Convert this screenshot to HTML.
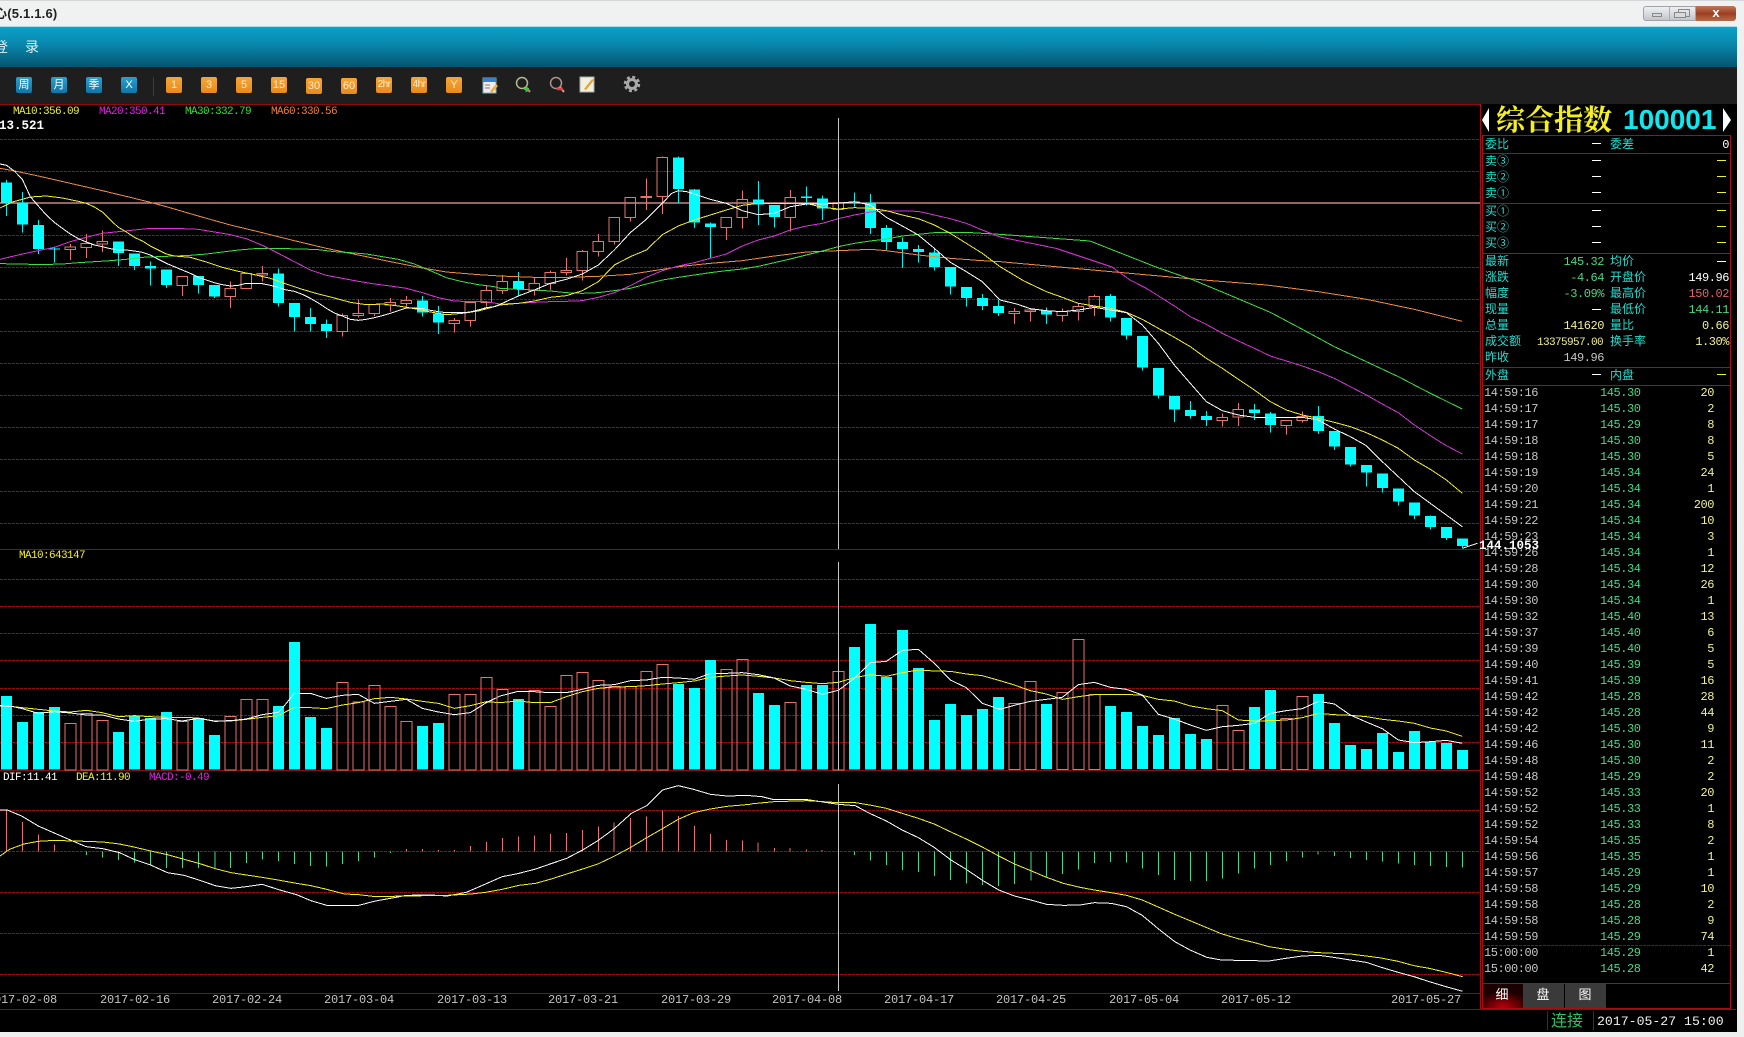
<!DOCTYPE html>
<html lang="zh"><head><meta charset="utf-8"><title>行情</title>
<style>
html,body{margin:0;padding:0;width:1744px;height:1037px;overflow:hidden;background:#eef0f0}
#w{position:absolute;left:0;top:0;width:1744px;height:1037px;overflow:hidden}
svg{position:absolute;left:0;top:0}
.a{position:absolute}
.ic{position:absolute;top:77px;width:16px;height:16px;border-radius:2px;color:#fff;font:11px/16px "Liberation Sans","Noto Sans CJK SC",sans-serif;text-align:center;overflow:hidden;white-space:nowrap}
.b{background:linear-gradient(#2a9fd0,#0f75a5)}
.o{background:linear-gradient(#f5a636,#e88a1e);color:#ffe9c4}
text{white-space:pre}
g[transform] *{shape-rendering:crispEdges}
.m{font-family:"Liberation Mono",monospace;font-size:12px;letter-spacing:-.45px}
.dt{font-family:"Liberation Mono",monospace;font-size:12px;letter-spacing:-.2px;fill:#c4c4c4}
.l{font-family:"Liberation Mono",monospace;font-size:11px;letter-spacing:-.6px}
.c{font-family:"Liberation Sans","Noto Sans CJK SC",sans-serif;font-size:12px;fill:#25dcd0}
.g{fill:#45d985}.y{fill:#f2f08e}.t{fill:#c6c6c6}.wh{fill:#fff}
.tm .m{fill:#c6c6c6}
</style></head><body><div id="w">
<div class="a" style="left:0;top:0;width:1744px;height:27px;background:#f0f2f2;border-top:1px solid #d4d6d8;box-sizing:border-box"></div>
<div class="a" style="left:-6px;top:6px;font:bold 13px/16px 'Liberation Sans','Noto Sans CJK SC',sans-serif;letter-spacing:.2px;color:#222">心(5.1.1.6)</div>
<div class="a" style="left:1643px;top:6px;width:53px;height:15px;background:linear-gradient(#eef0f2,#c2c6cb);border:1px solid #a0a4a8;box-sizing:border-box;border-radius:3px 0 0 3px"></div>
<div class="a" style="left:1652px;top:13px;width:10px;height:4px;border:1px solid #888;box-sizing:border-box"></div>
<div class="a" style="left:1669px;top:6px;width:1px;height:15px;background:#a8acb0"></div>
<div class="a" style="left:1678px;top:9px;width:12px;height:8px;border:1px solid #888;box-sizing:border-box"></div>
<div class="a" style="left:1674px;top:12px;width:12px;height:6px;border:1px solid #888;box-sizing:border-box;background:#d8dadc"></div>
<div class="a" style="left:1696px;top:6px;width:40px;height:15px;background:linear-gradient(#c0785c,#9c3e22 50%,#b86c4a);border-radius:0 3px 3px 0;color:#fff;font:bold 13px/13px 'Liberation Sans',sans-serif;text-align:center">x</div>
<div class="a" style="left:0;top:26px;width:1737px;height:41px;background:linear-gradient(#0ba2ca,#0886aa 45%,#045570);border-top:1px solid #a8dce8;box-sizing:border-box"></div>
<div class="a" style="left:-6px;top:39px;font:14px/17px 'Liberation Sans','Noto Sans CJK SC',sans-serif;color:#dff0f5;letter-spacing:17px">登录</div>
<div class="a" style="left:0;top:67px;width:1737px;height:37px;background:#1e1e1e"></div>
<div class="a" style="left:0;top:104px;width:1737px;height:928px;background:#000"></div>
<div class="ic b" style="left:16px">周</div><div class="ic b" style="left:51px">月</div><div class="ic b" style="left:86px">季</div><div class="ic b" style="left:121px">X</div>
<div class="a" style="left:153px;top:77px;width:1px;height:19px;background:#3c3c3c"></div>
<div class="ic o" style="left:166px">1</div><div class="ic o" style="left:201px">3</div><div class="ic o" style="left:236px">5</div><div class="ic o" style="left:271px">15</div><div class="ic o" style="left:306px;top:78px">30</div><div class="ic o" style="left:341px;top:78px">60</div><div class="ic o" style="left:376px;font-size:10px;letter-spacing:-.6px">2hr</div><div class="ic o" style="left:411px;font-size:10px;letter-spacing:-.6px">4hr</div><div class="ic o" style="left:446px">Y</div>
<svg width="1744" height="1037" viewBox="0 0 1744 1037" fill="none">
<!-- toolbar icons -->
<rect x="483" y="78" width="13" height="15" fill="#e8eef4" stroke="#8aa"/><rect x="483" y="78" width="13" height="4" fill="#3a7fc8"/><path d="M490 91l6-7 2 2-6 7z" fill="#f0b040"/><path d="M485 85h5M485 88h5" stroke="#c06060"/>
<circle cx="522" cy="83" r="5.5" stroke="#b8b890" stroke-width="1.5"/><path d="M526 87l4 5" stroke="#e08060" stroke-width="2"/><path d="M524 89h5M526.500 87v5" stroke="#40c050" stroke-width="2"/>
<circle cx="556" cy="83" r="5.5" stroke="#b09090" stroke-width="1.5"/><path d="M560 87l4 5" stroke="#e0a080" stroke-width="2"/><path d="M557 89h6" stroke="#e04040" stroke-width="2.500"/>
<rect x="580" y="77" width="14" height="15" fill="#f0f0e0" stroke="#aaa"/><path d="M584 89l8-10 2 1-8 10z" fill="#e8a030"/>
<circle cx="632" cy="84" r="4.500" stroke="#a8a8a8" stroke-width="3"/><circle cx="632" cy="84" r="7" stroke="#a8a8a8" stroke-width="2.500" stroke-dasharray="3 2.500"/>

<!-- frames -->
<g stroke="#8e0b10" shape-rendering="crispEdges">
<path d="M0 104.500H1480M0 549.500H1480M0 770.500H1480M0 993.500H1480M0 1009.500H1736"/>
<path d="M1480.500 104V1009M1482.500 135V1009M1730.500 135V1009M1482 135.500H1731M1482 153.500H1731M1482 203.500H1731M1482 253.500H1731M1482 367.500H1731M1482 385.500H1731M1482 983.500H1731M1482 1008.500H1731" stroke="#a50e12"/>
<path d="M1547.500 1011V1030M1593.500 1011V1030"/>
</g>
<path d="M1483 945.500H1730" stroke="#8e0b10" stroke-dasharray="3 1" shape-rendering="crispEdges"/>
<path d="M0 139.500H1480M0 171.500H1480M0 235.500H1480M0 267.500H1480M0 299.500H1480M0 331.500H1480M0 363.500H1480M0 395.500H1480M0 427.500H1480M0 459.500H1480M0 491.500H1480M0 523.500H1480M0 579.500H1480M0 606.500H1480M0 633.500H1480M0 660.500H1480M0 688.500H1480M0 715.500H1480M0 742.500H1480M0 810.500H1480M0 851.500H1480M0 892.500H1480M0 933.500H1480M0 974.500H1480" stroke="#960c10" stroke-dasharray="3 1" shape-rendering="crispEdges"/>
<path d="M0 203H1480" stroke="#eea0a0" stroke-width="1.200"/>

<!-- candles 1 -->
<g transform="translate(0,140) scale(.33333)">
<path stroke="#00f0f0" stroke-width="3" d="M19 120V228M67 156V278M115 240V342M163 320V368M355 304V378M403 340V390M451 364V436M499 388V444M595 408V460M643 435V474M835 385V500M883 489V574M931 504V574M979 538V594M1267 468V530M1315 498V582"/>
<path stroke="#00ffff" stroke-width="33" d="M19 128V188M67 188V254M115 255V327M163 325V328M355 304V339M403 340V378M451 378V386M499 388V435M595 408V435M643 435V469M835 400V489M883 489V531M931 531V552M979 552V573M1267 481V518M1315 520V548"/>
<path stroke="#e8726c" stroke-width="3" d="M211 312V321M211 329V360M259 282V310M259 323V354M307 272V304M307 312V336M547 437V468M691 424V445M691 470V504M739 398V401M787 378V400M787 405V424M1027 520V526M1027 574V590M1075 478V520M1075 527V532M1123 520V528M1171 474V488M1171 495V514M1219 468V481M1219 491V506M1363 534V541M1363 551V578M1411 542V560M1459 438V451M1459 487V500M195 321h32V329h-32zM243 310h32V323h-32zM291 304h32V312h-32zM531 409h32V437h-32zM675 445h32V470h-32zM723 401h32V446h-32zM771 400h32V405h-32zM1011 526h32V574h-32zM1059 520h32V527h-32zM1107 493h32V520h-32zM1155 488h32V495h-32zM1203 481h32V491h-32zM1347 541h32V551h-32zM1395 487h32V542h-32zM1443 451h32V487h-32z"/>
<polyline stroke="#f08a3c" stroke-width="3" points="0,85 40,92 115,108 211,130 307,152 403,175 451,187 499,200 595,228 691,255 787,278 883,302 979,325 1075,345 1171,365 1267,384 1339,396 1435,404 1500,408"/>
<polyline stroke="#3ae03a" stroke-width="3" points="0,371 67,372 115,374 187,372 235,368 283,365 331,362 379,358 427,352 475,350 523,348 571,346 619,342 667,336 715,330 763,326 811,326 859,326 907,327 955,329 1003,335 1051,338 1099,342 1147,350 1195,358 1243,372 1291,392 1339,413 1387,425 1435,434 1483,440 1500,445"/>
<polyline stroke="#e030e0" stroke-width="3" points="0,358 67,342 115,332 163,322 211,305 259,292 307,280 355,275 403,270 451,265 499,266 547,266 595,268 643,276 691,284 739,296 787,316 835,340 883,365 931,390 979,406 1027,415 1075,424 1123,432 1171,438 1219,445 1267,458 1315,473 1363,483 1411,485 1459,485 1500,492"/>
<polyline stroke="#f4f020" stroke-width="3" points="0,204 40,185 67,178 91,171 139,168 187,174 235,184 259,190 283,201 307,216 331,240 355,262 379,276 403,292 427,303 451,318 475,330 499,342 523,348 571,352 619,366 667,382 715,394 763,404 811,415 859,432 907,448 955,462 1003,474 1051,487 1099,494 1147,492 1195,498 1243,506 1291,516 1339,524 1387,520 1435,513 1483,500 1500,495"/>
<polyline stroke="#fff" stroke-width="3" points="0,72 20,76 45,95 67,118 91,170 115,198 139,225 163,247 187,265 211,282 235,296 259,306 283,315 307,320 331,326 355,330 379,330 403,333 427,337 451,345 475,358 499,370 523,380 547,390 571,400 595,412 619,420 643,428 667,434 691,438 715,436 739,430 763,430 787,431 811,436 835,442 859,450 883,454 907,463 931,475 955,489 979,505 1003,519 1027,528 1051,538 1075,541 1099,538 1123,533 1147,527 1171,520 1195,512 1219,504 1243,504 1267,506 1291,511 1315,515 1339,518 1363,518 1387,518 1411,516 1435,510 1459,503 1483,500 1500,493"/>
</g>
<!-- candles 2 -->
<g transform="translate(500,140) scale(.33333)">
<path stroke="#00f0f0" stroke-width="3" d="M55 396V466M535 50V190M583 147V264M631 248V354M775 123V255M823 195V262M919 140V196M967 166V240M1063 158V200M1111 162V282M1159 255V330M1207 292V384M1255 315V368M1303 326V392M1351 381V464M1399 441V500M1447 462V510M1495 480V528"/>
<path stroke="#00ffff" stroke-width="33" d="M55 423V449M535 52V147M583 148V248M631 250V261M775 178V194M823 195V231M919 170V174M967 175V205M1063 184V186M1111 187V264M1159 264V306M1207 306V327M1255 327V336M1303 337V381M1351 381V440M1399 441V474M1447 474V498M1495 498V519"/>
<path stroke="#e8726c" stroke-width="3" d="M7 405V424M7 452V462M103 414V431M103 452V466M151 392V397M151 431V450M199 354V391M199 398V406M247 330V334M247 392V422M295 282V304M295 335V350M343 305V314M391 233V244M439 116V169M439 173V210M487 50V52M487 170V222M679 263V300M727 152V178M727 233V266M871 150V172M871 233V274M1015 185V187M-9 424h32V452h-32zM87 431h32V452h-32zM135 397h32V431h-32zM183 391h32V398h-32zM231 334h32V392h-32zM279 304h32V335h-32zM327 232h32V305h-32zM375 172h32V233h-32zM423 169h32V173h-32zM471 52h32V170h-32zM663 233h32V263h-32zM711 178h32V233h-32zM855 172h32V233h-32zM999 187h32V208h-32z"/>
<polyline stroke="#f08a3c" stroke-width="3" points="0,408 103,412 199,412 295,409 391,403 487,388 535,380 631,370 727,362 823,348 919,336 1015,332 1111,328 1159,332 1255,345 1351,355 1447,362 1500,365"/>
<polyline stroke="#3ae03a" stroke-width="3" points="0,445 55,448 103,450 151,453 199,458 247,460 295,458 343,452 391,445 439,432 487,420 535,412 583,405 631,398 679,392 727,387 775,379 823,368 871,357 919,345 967,333 1015,320 1063,310 1111,303 1159,297 1207,288 1255,283 1303,278 1351,277 1399,277 1447,280 1500,283"/>
<polyline stroke="#d830d8" stroke-width="3" points="0,492 55,490 103,487 151,485 199,484 247,482 295,472 343,458 391,437 439,412 487,392 535,378 583,368 631,355 679,342 727,318 775,300 823,288 871,270 919,258 967,250 1015,236 1063,225 1111,216 1159,213 1207,213 1255,214 1303,225 1351,236 1399,250 1447,270 1500,291"/>
<polyline stroke="#f4f020" stroke-width="3" points="0,495 55,490 103,483 151,472 199,467 247,452 295,425 343,375 391,350 439,330 487,284 535,258 583,240 631,225 679,210 727,196 775,190 823,190 871,190 919,190 967,202 1015,207 1063,203 1111,205 1159,212 1207,225 1255,236 1303,255 1351,280 1399,310 1447,340 1500,380"/>
<polyline stroke="#fff" stroke-width="3" points="0,493 7,490 55,468 103,450 151,430 199,418 247,402 295,375 343,330 391,278 439,238 487,190 515,160 535,152 560,155 583,162 631,178 679,190 727,212 775,224 823,220 871,200 919,192 967,192 1015,190 1063,185 1111,195 1159,232 1207,258 1255,285 1303,325 1351,367 1399,395 1447,425 1500,480"/>
</g>
<!-- candles 3 -->
<g transform="translate(1000,280) scale(.33333)">
<path stroke="#00f0f0" stroke-width="3" d="M139 82V132M331 42V124M379 114V178M427 168V272M475 264V356M523 348V426M571 363V416M619 393V438M763 372V420M811 396V458M955 378V462M1003 453V510M1051 501V560M1099 555V620M1147 580V638M1195 625V677M1243 667V717M1291 706V749M1339 741V780M1387 775V805"/>
<path stroke="#00ffff" stroke-width="33" d="M139 91V104M331 48V113M379 114V167M427 168V263M475 264V347M523 348V389M571 390V408M619 408V420M763 388V399M811 400V435M955 408V453M1003 453V500M1051 501V554M1099 555V578M1147 580V624M1195 625V665M1243 667V707M1291 708V741M1339 741V774M1387 775V798"/>
<path stroke="#e8726c" stroke-width="3" d="M43 84V94M43 101V132M91 86V90M91 95V125M187 85V94M187 106V124M235 72V80M235 94V122M283 44V49M283 80V108M667 400V412M667 422V440M715 369V388M715 411V438M859 437V464M907 394V410M907 422V428M27 94h32V101h-32zM75 90h32V95h-32zM171 94h32V106h-32zM219 80h32V94h-32zM267 49h32V80h-32zM651 412h32V422h-32zM699 388h32V411h-32zM843 421h32V437h-32zM891 410h32V422h-32z"/>
<polyline stroke="#f08a3c" stroke-width="3" points="0,-55 300,-28 635,2 800,15 955,35 1100,58 1243,88 1387,124"/>
<polyline stroke="#3ae03a" stroke-width="3" points="0,-137 270,-117 468,-39 580,0 700,50 811,97 907,148 1003,200 1099,245 1195,290 1291,340 1387,387"/>
<polyline stroke="#d830d8" stroke-width="3" points="0,-129 168,-95 336,-39 390,0 439,25 487,55 523,78 571,110 619,133 667,160 715,183 763,205 811,228 859,243 907,258 955,275 1003,295 1051,320 1099,345 1147,372 1195,398 1243,435 1291,467 1339,497 1387,522"/>
<polyline stroke="#f4f020" stroke-width="3" points="0,-40 70,2 139,35 187,52 235,70 283,78 331,85 379,97 427,118 475,145 523,172 571,200 619,235 667,265 715,298 763,330 811,365 859,390 907,405 955,415 1003,427 1051,440 1099,458 1147,480 1195,505 1243,540 1291,568 1339,600 1387,640"/>
<polyline stroke="#fff" stroke-width="3" points="0,60 50,72 91,86 139,92 187,95 235,90 283,82 331,90 379,98 427,135 475,190 523,255 571,310 619,365 667,392 715,405 763,412 811,412 859,412 907,412 955,420 1003,447 1051,470 1099,497 1147,545 1195,590 1243,635 1291,670 1339,705 1387,740"/>
<polyline stroke="#fff" stroke-width="3" points="1387,805 1432,790"/>
</g>
<!-- volume 1 -->
<g transform="translate(0,540) scale(.33333)">
<path stroke="#00ffff" stroke-width="33" d="M19 468V688M67 546V688M115 516V688M163 501V688M355 576V688M403 526V688M451 534V688M499 516V688M595 534V688M643 585V688M835 498V688M883 306V688M931 531V688M979 564V688M1267 558V688M1315 549V688"/>
<path stroke="#e8726c" stroke-width="3" d="M195 550h33V690h-33zM243 520h33V690h-33zM291 541h33V690h-33zM531 544h33V690h-33zM675 529h33V690h-33zM723 478h33V690h-33zM771 478h33V690h-33zM1011 427h33V690h-33zM1059 486h33V690h-33zM1107 436h33V690h-33zM1155 499h33V690h-33zM1203 544h33V690h-33zM1347 463h33V690h-33zM1395 463h33V690h-33zM1443 412h33V690h-33z"/>
<polyline stroke="#f4f020" stroke-width="3" points="0,496 67,503 115,508 163,513 211,516 259,511 307,518 355,530 403,527 451,530 499,532 547,532 595,534 643,544 691,543 739,538 787,532 835,527 883,502 931,503 979,506 1027,495 1075,488 1123,476 1171,472 1219,477 1267,484 1315,490 1363,505 1411,497 1459,485 1500,488"/>
<polyline stroke="#fff" stroke-width="3" points="0,498 40,500 67,506 115,520 163,515 211,519 259,525 307,525 355,537 403,544 451,537 499,536 547,543 595,535 643,543 691,542 739,537 787,524 835,517 859,490 883,460 931,460 979,475 1027,466 1075,463 1123,490 1171,484 1219,478 1267,505 1315,516 1363,524 1411,518 1459,488 1500,468"/>
</g>
<!-- volume 2 -->
<g transform="translate(500,540) scale(.33333)">
<path stroke="#00ffff" stroke-width="33" d="M55 477V688M535 432V688M583 444V688M631 360V688M775 459V688M823 495V688M919 435V688M967 435V688M1063 321V688M1111 252V688M1159 411V688M1207 270V688M1255 384V688M1303 540V688M1351 492V688M1399 525V688M1447 507V688M1495 471V688"/>
<path stroke="#e8726c" stroke-width="3" d="M-9 448h33V690h-33zM87 452h33V690h-33zM135 499h33V690h-33zM183 406h33V690h-33zM231 397h33V690h-33zM279 421h33V690h-33zM327 440h33V690h-33zM375 440h33V690h-33zM423 394h33V690h-33zM471 373h33V690h-33zM663 388h33V690h-33zM711 358h33V690h-33zM855 487h33V690h-33zM999 394h33V690h-33z"/>
<polyline stroke="#f4f020" stroke-width="3" points="0,488 55,483 103,488 151,488 199,470 247,455 295,445 343,441 391,440 439,437 487,432 535,428 583,423 631,412 679,408 727,405 775,409 823,414 871,422 919,427 967,431 1015,427 1063,413 1111,404 1159,409 1207,398 1255,390 1303,393 1351,394 1399,402 1447,407 1500,422"/>
<polyline stroke="#fff" stroke-width="3" points="0,468 55,454 103,455 151,458 199,458 247,448 295,436 343,434 391,422 439,420 487,412 535,414 583,418 631,400 679,400 727,398 775,404 823,414 871,438 919,448 967,463 1015,451 1063,415 1111,368 1159,364 1207,331 1255,328 1303,370 1351,420 1399,443 1447,490 1500,508"/>
</g>
<!-- volume 3 -->
<g transform="translate(1000,620) scale(.33333)">
<path stroke="#00ffff" stroke-width="33" d="M139 252V447M331 258V447M379 276V447M427 318V447M475 345V447M523 294V447M571 342V447M619 357V447M763 261V447M811 210V447M955 222V447M1003 309V447M1051 375V447M1099 387V447M1147 339V447M1195 396V447M1243 333V447M1291 366V447M1339 369V447M1387 390V447"/>
<path stroke="#e8726c" stroke-width="3" d="M27 250h33V449h-33zM75 184h33V449h-33zM171 217h33V449h-33zM219 58h33V449h-33zM267 224h33V449h-33zM651 256h33V449h-33zM699 331h33V449h-33zM843 296h33V449h-33zM891 229h33V449h-33z"/>
<polyline stroke="#f4f020" stroke-width="3" points="0,182 43,195 91,212 139,222 187,238 235,230 283,224 331,223 379,223 427,226 475,238 523,243 571,258 619,266 667,272 715,300 763,303 811,302 859,300 907,293 955,280 1003,284 1051,286 1099,290 1147,298 1195,303 1243,310 1291,324 1339,333 1387,349"/>
<polyline stroke="#fff" stroke-width="3" points="0,268 43,256 91,244 139,238 187,232 235,194 283,187 331,202 379,208 427,225 475,283 523,297 571,315 619,331 667,320 715,316 763,310 811,280 859,272 907,266 955,244 1003,252 1051,285 1099,306 1147,326 1195,360 1243,368 1291,365 1339,361 1387,370"/>
</g>
<!-- macd 1 -->
<g transform="translate(0,770) scale(.47832,.33333)">
<path vector-effect="non-scaling-stroke" stroke="#e8726c" stroke-width="1" d="M14 118V244M47 156V244M80 194V244M114 224V244M850 237V244M883 237V244M917 240V244M950 240V244M984 228V244M1017 216V244M1051 204V244M1084 200V244M1117 197V244M1151 192V244M1184 189V244M1218 180V244M1251 170V244M1284 158V244M1318 144V244M1352 140V244M1385 122V244M1418 138V244M1452 168V244M1485 192V244M1519 210V244M1552 212V244"/>
<path vector-effect="non-scaling-stroke" stroke="#45d985" stroke-width="1" d="M181 244V255M214 244V262M248 244V270M281 244V278M315 244V284M348 244V294M382 244V294M415 244V294M449 244V295M482 244V294M515 244V279M549 244V268M582 244V273M616 244V282M649 244V288M683 244V290M716 244V282M750 244V273M783 244V262M816 244V249"/>
<polyline vector-effect="non-scaling-stroke" stroke="#fff" stroke-width="1" points="0,120 15,120 45,138 80,168 115,190 150,212 180,230 215,236 250,248 280,268 315,285 350,308 385,316 420,332 450,347 483,355 515,350 548,343 585,360 620,374 650,392 683,406 750,406 785,393 820,384 850,376 900,375 935,378 975,367 1015,342 1050,320 1085,310 1120,297 1150,282 1185,265 1218,240 1250,212 1285,175 1320,130 1352,107 1385,60 1418,47 1450,58 1485,73 1520,78 1568,76"/>
<polyline vector-effect="non-scaling-stroke" stroke="#f4f020" stroke-width="1" points="0,258 20,238 50,222 80,214 115,211 150,213 180,214 215,216 250,222 280,231 315,243 350,254 385,268 420,282 450,296 483,308 515,315 548,322 585,331 620,340 650,347 683,358 720,372 750,374 785,380 850,378 935,376 985,372 1015,367 1050,358 1085,346 1120,340 1150,328 1185,312 1218,297 1250,282 1285,258 1320,231 1352,203 1385,176 1418,148 1450,128 1485,117 1520,109 1568,103"/>
</g>
<!-- macd 2 -->
<g transform="translate(750,770) scale(.47832,.33333)">
<path vector-effect="non-scaling-stroke" stroke="#e8726c" stroke-width="1" d="M17 218V244M51 234V244M84 234V244M118 238V244M151 240V244"/>
<path vector-effect="non-scaling-stroke" stroke="#45d985" stroke-width="1" d="M218 244V255M252 244V271M285 244V285M319 244V300M352 244V306M386 244V318M419 244V330M453 244V340M486 244V345M520 244V348M553 244V342M587 244V332M620 244V320M653 244V312M687 244V298M720 244V279M754 244V276M787 244V278M821 244V295M854 244V315M888 244V330M921 244V333M954 244V333M988 244V325M1021 244V310M1055 244V295M1088 244V285M1122 244V273M1155 244V262M1188 244V254M1222 244V258M1255 244V264M1289 244V270M1322 244V274M1356 244V280M1389 244V285M1423 244V288M1456 244V291M1490 244V292"/>
<polyline vector-effect="non-scaling-stroke" stroke="#fff" stroke-width="1" points="0,77 25,80 50,89 120,89 185,103 220,107 250,130 285,153 318,180 352,203 385,232 420,270 452,298 487,332 520,360 553,378 587,390 620,403 655,406 690,405 720,398 755,400 787,410 820,436 855,478 888,515 920,540 955,562 985,570 1085,573 1120,565 1155,558 1190,556 1220,562 1255,570 1288,577 1320,592 1355,607 1388,620 1420,635 1455,650 1490,664"/>
<polyline vector-effect="non-scaling-stroke" stroke="#f4f020" stroke-width="1" points="0,102 50,95 120,92 185,98 220,98 250,105 285,115 318,130 352,145 385,162 420,186 452,207 487,232 520,258 553,282 587,302 620,322 655,340 690,352 720,360 755,368 787,376 820,390 855,412 888,433 920,452 955,473 985,491 1020,506 1055,518 1085,530 1120,538 1155,544 1190,548 1255,552 1288,558 1320,564 1355,574 1388,587 1420,595 1455,607 1490,620"/>
</g>
<!-- crosshair -->
<path d="M838.500 118V549M838.500 562V770M838.500 784V991" stroke="#c8c8c8" shape-rendering="crispEdges"/>
<!-- legends -->
<text class="l" x="13" y="114" fill="#ecec30">MA10:356.09</text>
<text class="l" x="99" y="114" fill="#e020e0">MA20:350.41</text>
<text class="l" x="185" y="114" fill="#30e030">MA30:332.79</text>
<text class="l" x="271" y="114" fill="#f08030">MA60:330.56</text>
<text x="-1" y="129" font-family="Liberation Mono" font-size="12.500" font-weight="bold" fill="#fff">13.521</text>
<text class="l" x="19" y="558" fill="#f4f020">MA10:643147</text>
<text class="l" x="3" y="780" fill="#fff">DIF:11.41</text>
<text class="l" x="76" y="780" fill="#f4f020">DEA:11.90</text>
<text class="l" x="149" y="780" fill="#e020e0">MACD:-0.49</text>
<text class="dt" x="-13" y="1003">2017-02-08</text><text class="dt" x="100" y="1003">2017-02-16</text><text class="dt" x="212" y="1003">2017-02-24</text><text class="dt" x="324" y="1003">2017-03-04</text><text class="dt" x="437" y="1003">2017-03-13</text><text class="dt" x="548" y="1003">2017-03-21</text><text class="dt" x="661" y="1003">2017-03-29</text><text class="dt" x="772" y="1003">2017-04-08</text><text class="dt" x="884" y="1003">2017-04-17</text><text class="dt" x="996" y="1003">2017-04-25</text><text class="dt" x="1109" y="1003">2017-05-04</text><text class="dt" x="1221" y="1003">2017-05-12</text><text class="dt" x="1391" y="1003">2017-05-27</text>
<!-- right header -->
<path d="M1489 108V132L1482 120z" fill="#fff"/><path d="M1723 108V132L1731 120z" fill="#fff"/>
<text x="1496" y="130" font-family="Noto Serif CJK SC,serif" font-size="29" font-weight="bold" fill="#f4f020">综合指数</text>
<text x="1623" y="129" font-family="Liberation Sans,sans-serif" font-size="28" font-weight="bold" fill="#10e8f0">100001</text>
<!-- quote labels -->
<text class="c" x="1485" y="148">委比</text><text class="c" x="1610" y="148">委差</text>
<text class="c" x="1485" y="165">卖③</text><text class="c" x="1485" y="181">卖②</text><text class="c" x="1485" y="197">卖①</text>
<text class="c" x="1485" y="215">买①</text><text class="c" x="1485" y="231">买②</text><text class="c" x="1485" y="247">买③</text>
<text class="c" x="1485" y="265">最新</text><text class="c" x="1610" y="265">均价</text>
<text class="c" x="1485" y="281">涨跌</text><text class="c" x="1610" y="281">开盘价</text>
<text class="c" x="1485" y="297">幅度</text><text class="c" x="1610" y="297">最高价</text>
<text class="c" x="1485" y="313">现量</text><text class="c" x="1610" y="313">最低价</text>
<text class="c" x="1485" y="329">总量</text><text class="c" x="1610" y="329">量比</text>
<text class="c" x="1485" y="345">成交额</text><text class="c" x="1610" y="345">换手率</text>
<text class="c" x="1485" y="361">昨收</text>
<text class="c" x="1485" y="379">外盘</text><text class="c" x="1610" y="379">内盘</text>
<!-- dashes -->
<path stroke="#fff" d="M1592 143.500H1601M1592 160.500H1601M1592 176.500H1601M1592 192.500H1601M1592 210.500H1601M1592 226.500H1601M1592 242.500H1601M1717 261.500H1726M1592 309.500H1601M1592 374.500H1601" shape-rendering="crispEdges"/>
<path stroke="#f0f030" d="M1717 160.500H1726M1717 176.500H1726M1717 192.500H1726M1717 210.500H1726M1717 226.500H1726M1717 242.500H1726M1717 374.500H1726" shape-rendering="crispEdges"/>
<!-- quote values -->
<text class="m wh" x="1729" y="148" text-anchor="end">0</text>
<text class="m g" x="1604" y="265" text-anchor="end">145.32</text>
<text class="m g" x="1604" y="281" text-anchor="end">-4.64</text>
<text class="m wh" x="1729" y="281" text-anchor="end">149.96</text>
<text class="m g" x="1604" y="297" text-anchor="end">-3.09%</text>
<text class="m" x="1729" y="297" text-anchor="end" fill="#e06468">150.02</text>
<text class="m g" x="1729" y="313" text-anchor="end">144.11</text>
<text class="m y" x="1604" y="329" text-anchor="end">141620</text>
<text class="m y" x="1729" y="329" text-anchor="end">0.66</text>
<text class="l y" x="1537" y="345">13375957.00</text>
<text class="m y" x="1729" y="345" text-anchor="end">1.30%</text>
<text class="m t" x="1604" y="361" text-anchor="end">149.96</text>
<!-- ticks -->
<g class="tm">
<text class="m" x="1484" y="396">14:59:16</text><text class="m" x="1484" y="412">14:59:17</text><text class="m" x="1484" y="428">14:59:17</text><text class="m" x="1484" y="444">14:59:18</text><text class="m" x="1484" y="460">14:59:18</text><text class="m" x="1484" y="476">14:59:19</text><text class="m" x="1484" y="492">14:59:20</text><text class="m" x="1484" y="508">14:59:21</text><text class="m" x="1484" y="524">14:59:22</text><text class="m" x="1484" y="540">14:59:23</text><text class="m" x="1484" y="556">14:59:26</text><text class="m" x="1484" y="572">14:59:28</text><text class="m" x="1484" y="588">14:59:30</text><text class="m" x="1484" y="604">14:59:30</text><text class="m" x="1484" y="620">14:59:32</text><text class="m" x="1484" y="636">14:59:37</text><text class="m" x="1484" y="652">14:59:39</text><text class="m" x="1484" y="668">14:59:40</text><text class="m" x="1484" y="684">14:59:41</text><text class="m" x="1484" y="700">14:59:42</text><text class="m" x="1484" y="716">14:59:42</text><text class="m" x="1484" y="732">14:59:42</text><text class="m" x="1484" y="748">14:59:46</text><text class="m" x="1484" y="764">14:59:48</text><text class="m" x="1484" y="780">14:59:48</text><text class="m" x="1484" y="796">14:59:52</text><text class="m" x="1484" y="812">14:59:52</text><text class="m" x="1484" y="828">14:59:52</text><text class="m" x="1484" y="844">14:59:54</text><text class="m" x="1484" y="860">14:59:56</text><text class="m" x="1484" y="876">14:59:57</text><text class="m" x="1484" y="892">14:59:58</text><text class="m" x="1484" y="908">14:59:58</text><text class="m" x="1484" y="924">14:59:58</text><text class="m" x="1484" y="940">14:59:59</text><text class="m" x="1484" y="956">15:00:00</text><text class="m" x="1484" y="972">15:00:00</text>
</g>
<g>
<text class="m g" x="1600" y="396">145.30</text><text class="m g" x="1600" y="412">145.30</text><text class="m g" x="1600" y="428">145.29</text><text class="m g" x="1600" y="444">145.30</text><text class="m g" x="1600" y="460">145.30</text><text class="m g" x="1600" y="476">145.34</text><text class="m g" x="1600" y="492">145.34</text><text class="m g" x="1600" y="508">145.34</text><text class="m g" x="1600" y="524">145.34</text><text class="m g" x="1600" y="540">145.34</text><text class="m g" x="1600" y="556">145.34</text><text class="m g" x="1600" y="572">145.34</text><text class="m g" x="1600" y="588">145.34</text><text class="m g" x="1600" y="604">145.34</text><text class="m g" x="1600" y="620">145.40</text><text class="m g" x="1600" y="636">145.40</text><text class="m g" x="1600" y="652">145.40</text><text class="m g" x="1600" y="668">145.39</text><text class="m g" x="1600" y="684">145.39</text><text class="m g" x="1600" y="700">145.28</text><text class="m g" x="1600" y="716">145.28</text><text class="m g" x="1600" y="732">145.30</text><text class="m g" x="1600" y="748">145.30</text><text class="m g" x="1600" y="764">145.30</text><text class="m g" x="1600" y="780">145.29</text><text class="m g" x="1600" y="796">145.33</text><text class="m g" x="1600" y="812">145.33</text><text class="m g" x="1600" y="828">145.33</text><text class="m g" x="1600" y="844">145.35</text><text class="m g" x="1600" y="860">145.35</text><text class="m g" x="1600" y="876">145.29</text><text class="m g" x="1600" y="892">145.29</text><text class="m g" x="1600" y="908">145.28</text><text class="m g" x="1600" y="924">145.28</text><text class="m g" x="1600" y="940">145.29</text><text class="m g" x="1600" y="956">145.29</text><text class="m g" x="1600" y="972">145.28</text>
</g>
<g text-anchor="end">
<text class="m y" x="1714" y="396">20</text><text class="m y" x="1714" y="412">2</text><text class="m y" x="1714" y="428">8</text><text class="m y" x="1714" y="444">8</text><text class="m y" x="1714" y="460">5</text><text class="m y" x="1714" y="476">24</text><text class="m y" x="1714" y="492">1</text><text class="m y" x="1714" y="508">200</text><text class="m y" x="1714" y="524">10</text><text class="m y" x="1714" y="540">3</text><text class="m y" x="1714" y="556">1</text><text class="m y" x="1714" y="572">12</text><text class="m y" x="1714" y="588">26</text><text class="m y" x="1714" y="604">1</text><text class="m y" x="1714" y="620">13</text><text class="m y" x="1714" y="636">6</text><text class="m y" x="1714" y="652">5</text><text class="m y" x="1714" y="668">5</text><text class="m y" x="1714" y="684">16</text><text class="m y" x="1714" y="700">28</text><text class="m y" x="1714" y="716">44</text><text class="m y" x="1714" y="732">9</text><text class="m y" x="1714" y="748">11</text><text class="m y" x="1714" y="764">2</text><text class="m y" x="1714" y="780">2</text><text class="m y" x="1714" y="796">20</text><text class="m y" x="1714" y="812">1</text><text class="m y" x="1714" y="828">8</text><text class="m y" x="1714" y="844">2</text><text class="m y" x="1714" y="860">1</text><text class="m y" x="1714" y="876">1</text><text class="m y" x="1714" y="892">10</text><text class="m y" x="1714" y="908">2</text><text class="m y" x="1714" y="924">9</text><text class="m y" x="1714" y="940">74</text><text class="m y" x="1714" y="956">1</text><text class="m y" x="1714" y="972">42</text>
</g>
<text x="1479" y="549" font-family="Liberation Mono" font-size="12.500" font-weight="bold" fill="#fff">144.1053</text>
<!-- tabs -->
<defs><radialGradient id="rg" cx="50%" cy="100%" r="70%"><stop offset="0" stop-color="#c00008"/><stop offset="1" stop-color="#1a0000"/></radialGradient></defs>
<rect x="1483" y="984" width="40" height="24" fill="url(#rg)"/>
<rect x="1523" y="984" width="41" height="24" fill="#3a3a3a"/>
<rect x="1565" y="984" width="41" height="24" fill="#3a3a3a"/>
<g font-family="Liberation Sans,Noto Sans CJK SC,sans-serif" font-size="13" fill="#fff" text-anchor="middle"><text x="1502" y="999">细</text><text x="1543" y="999">盘</text><text x="1585" y="999">图</text></g>
<!-- status -->
<text x="1551" y="1026" font-family="Liberation Sans,Noto Sans CJK SC,sans-serif" font-size="16" fill="#2fc060">连接</text>
<text x="1597" y="1025" font-family="Liberation Mono,monospace" font-size="13.200" fill="#f0f0f0">2017-05-27 15:00</text>
</svg>
</div></body></html>
